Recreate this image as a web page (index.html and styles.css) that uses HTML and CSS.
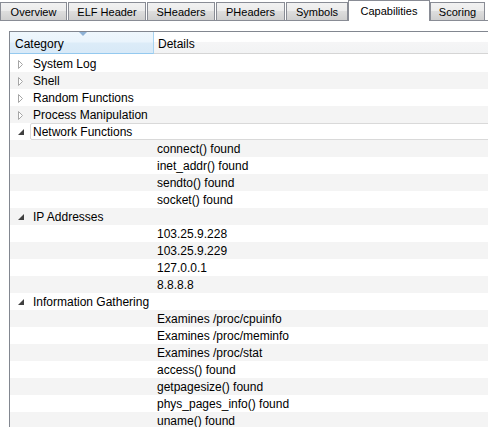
FILE: index.html
```html
<!DOCTYPE html>
<html>
<head>
<meta charset="utf-8">
<link rel="stylesheet" href="styles.css">
</head>
<body>
<div class="tabs">
  <div class="tab tab-overview">Overview</div>
  <div class="tab tab-elf">ELF Header</div>
  <div class="tab tab-sh">SHeaders</div>
  <div class="tab tab-ph">PHeaders</div>
  <div class="tab tab-sym">Symbols</div>
  <div class="tab tab-active">Capabilities</div>
  <div class="tab tab-score">Scoring</div>
</div>
<div class="panel">
  <div class="tree">
    <div class="head">
      <div class="hcell hcat">Category<span class="sort"></span></div>
      <div class="hcell hdet">Details</div>
    </div>
    <div class="rows">
      <div class="row"><div class="grp"><span class="exp"><svg width="6" height="9" viewBox="0 0 6 9"><polygon points="0.5,0.5 4.5,4.5 0.5,8.5" fill="#fff" stroke="#a6a6a6"/></svg></span>System Log</div></div>
      <div class="row"><div class="grp"><span class="exp"><svg width="6" height="9" viewBox="0 0 6 9"><polygon points="0.5,0.5 4.5,4.5 0.5,8.5" fill="#fff" stroke="#a6a6a6"/></svg></span>Shell</div></div>
      <div class="row"><div class="grp"><span class="exp"><svg width="6" height="9" viewBox="0 0 6 9"><polygon points="0.5,0.5 4.5,4.5 0.5,8.5" fill="#fff" stroke="#a6a6a6"/></svg></span>Random Functions</div></div>
      <div class="row"><div class="grp"><span class="exp"><svg width="6" height="9" viewBox="0 0 6 9"><polygon points="0.5,0.5 4.5,4.5 0.5,8.5" fill="#fff" stroke="#a6a6a6"/></svg></span>Process Manipulation</div></div>
      <div class="row row-focus"><div class="grp"><span class="exp"><svg width="6" height="6" viewBox="0 0 6 6"><polygon points="6,0 6,6 0,6" fill="#404040"/></svg></span>Network Functions</div></div>
      <div class="row"><div class="det">connect() found</div></div>
      <div class="row"><div class="det">inet_addr() found</div></div>
      <div class="row"><div class="det">sendto() found</div></div>
      <div class="row"><div class="det">socket() found</div></div>
      <div class="row"><div class="grp"><span class="exp"><svg width="6" height="6" viewBox="0 0 6 6"><polygon points="6,0 6,6 0,6" fill="#404040"/></svg></span>IP Addresses</div></div>
      <div class="row"><div class="det">103.25.9.228</div></div>
      <div class="row"><div class="det">103.25.9.229</div></div>
      <div class="row"><div class="det">127.0.0.1</div></div>
      <div class="row"><div class="det">8.8.8.8</div></div>
      <div class="row"><div class="grp"><span class="exp"><svg width="6" height="6" viewBox="0 0 6 6"><polygon points="6,0 6,6 0,6" fill="#404040"/></svg></span>Information Gathering</div></div>
      <div class="row"><div class="det">Examines /proc/cpuinfo</div></div>
      <div class="row"><div class="det">Examines /proc/meminfo</div></div>
      <div class="row"><div class="det">Examines /proc/stat</div></div>
      <div class="row"><div class="det">access() found</div></div>
      <div class="row"><div class="det">getpagesize() found</div></div>
      <div class="row"><div class="det">phys_pages_info() found</div></div>
      <div class="row"><div class="det">uname() found</div></div>
    </div>
  </div>
</div>
</body>
</html>
```

FILE: styles.css
```css
html, body {
  margin: 0;
  padding: 0;
  background: #fff;
  overflow: hidden;
}
body {
  width: 488px;
  height: 427px;
  font-family: "Liberation Sans", Arial, sans-serif;
  color: #000;
}
.tabs {
  display: flex;
  align-items: flex-end;
  gap: 1px;
  height: 20px;
  border-bottom: 1px solid #898c95;
}
.tab {
  box-sizing: border-box;
  flex: none;
  height: 18px;
  padding: 1px 0 0;
  border: 1px solid #898c95;
  border-bottom: none;
  background: linear-gradient(#f2f2f2 0%, #ebebeb 50%, #dddddd 50%, #cfcfcf 100%);
  font-size: 11px;
  line-height: 16px;
  text-align: center;
  white-space: nowrap;
}
.tab-overview { width: 67px; }
.tab-elf { width: 78px; }
.tab-sh { width: 68px; }
.tab-ph { width: 69px; }
.tab-sym { width: 62px; }
.tab-score { width: 55px; }
.tab-active {
  width: 82px;
  height: 21px;
  margin: 0 -1px -1px -1px;
  padding: 0;
  background: #fff;
  line-height: 20px;
  position: relative;
}
.panel {
  padding: 10px 0 0 9px;
}
.tree {
  border-left: 1px solid #828790;
  border-top: 1px solid #828790;
  font-size: 12px;
}
.head {
  display: grid;
  grid-template-columns: 144px 1fr;
  height: 22px;
}
.hcell {
  box-sizing: border-box;
  height: 22px;
  padding-top: 2px;
  line-height: 20px;
  white-space: nowrap;
}
.hcat {
  position: relative;
  padding-left: 5px;
  background: linear-gradient(#eff7fd 0%, #eaf4fc 48%, #dcecf8 52%, #d8e9f7 100%);
  border-right: 1px solid #a9d4f1;
  border-bottom: 1px solid #94c9ef;
}
.hdet {
  padding-left: 4px;
  background: linear-gradient(#ffffff 0%, #ffffff 45%, #f5f5f6 50%, #f2f3f4 100%);
  border-bottom: 1px solid #d5d5d5;
}
.sort {
  position: absolute;
  left: 69px;
  top: 0;
  width: 0;
  height: 0;
  border-left: 4px solid transparent;
  border-right: 4px solid transparent;
  border-top: 4px solid #8eb2d6;
}
.rows {
  padding-top: 1px;
}
.row {
  box-sizing: border-box;
  position: relative;
  display: grid;
  grid-template-columns: 144px 1fr;
  height: 17px;
  padding-top: 1px;
  line-height: 16px;
  white-space: nowrap;
}
.row:nth-child(even) {
  background: #f4f4f4;
}
.row-focus::after {
  content: "";
  position: absolute;
  left: 20px;
  right: -4px;
  top: 0;
  bottom: 0;
  border: 1px solid #d9d9d9;
  border-radius: 2px;
}
.grp {
  grid-column: 1;
  display: flex;
  align-items: center;
  padding-left: 8px;
}
.exp {
  width: 15px;
  height: 16px;
  display: flex;
  align-items: center;
  justify-content: flex-start;
}
.exp svg {
  display: block;
}
.det {
  grid-column: 2;
  padding-left: 3px;
}
```
